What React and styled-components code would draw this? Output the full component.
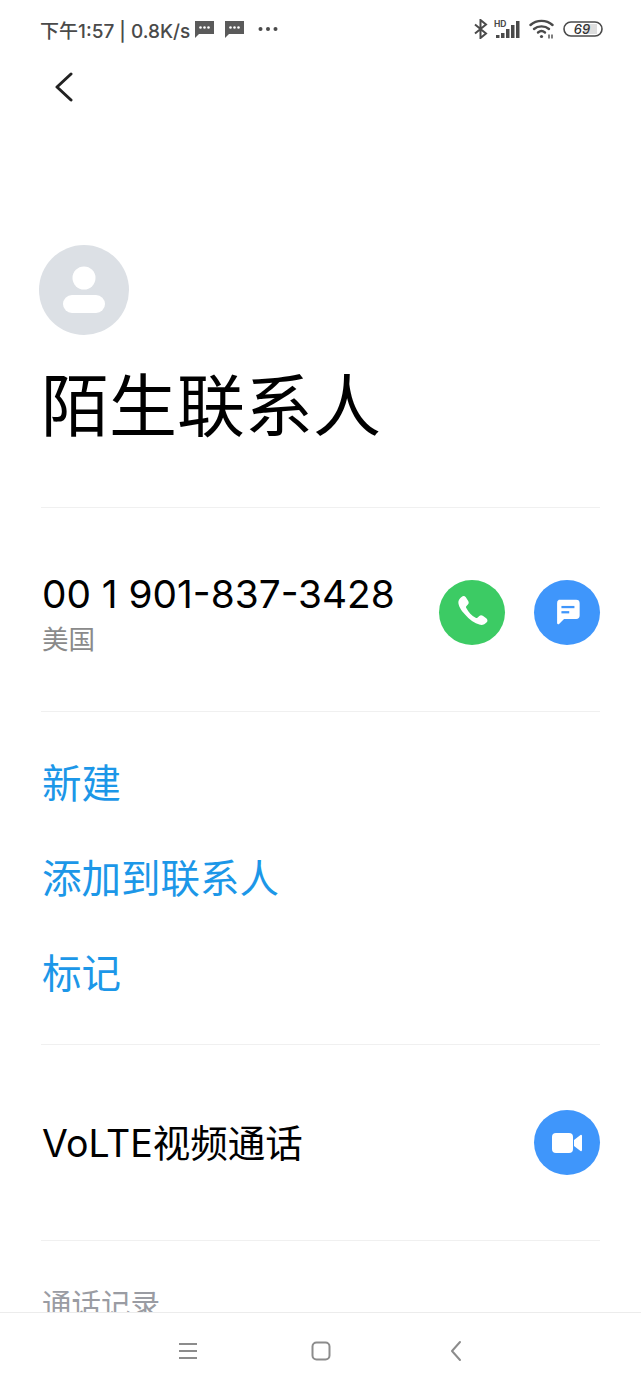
import React from 'react'
import styled, { createGlobalStyle } from 'styled-components'

const GlobalStyle = createGlobalStyle`
  html, body {
    margin: 0;
    padding: 0;
    background: #fff;
  }
  body {
    font-family: "Inter", "Noto Sans CJK SC", sans-serif;
  }
`

const Page = styled.div`
  width: 641px;
  height: 1389px;
  display: flex;
  flex-direction: column;
  overflow: hidden;
  background: #fff;
`

const Scroll = styled.div`
  flex: 1;
  min-height: 0;
  overflow: hidden;
`

const StatusBar = styled.div`
  height: 60px;
  box-sizing: border-box;
  padding: 0 38px 2px 40px;
  display: flex;
  align-items: center;
  justify-content: space-between;
  color: #4a4a4a;
`

const StatusLeft = styled.div`
  display: flex;
  align-items: center;
  font-size: 19px;
  font-weight: 500;
  white-space: nowrap;
`

const StatusRight = styled.div`
  display: flex;
  align-items: center;
`

const Glyph = styled.svg`
  flex: none;
  margin-left: ${p => p.$ml || 0}px;
`

const BackRow = styled.div`
  height: 53px;
  padding-left: 54px;
  display: flex;
  align-items: center;
`

const Content = styled.div`
  padding: 132px 41px 0 42px;
`

const Avatar = styled.div`
  width: 90px;
  height: 90px;
  margin-left: -3px;
  border-radius: 50%;
  background: #dce0e5;
  display: flex;
  align-items: center;
  justify-content: center;
`

const Title = styled.h1`
  margin: 22px 0 0 -1px;
  font-size: 68px;
  line-height: 98px;
  font-weight: 400;
  color: #000;
  white-space: nowrap;
`

const Divider = styled.div`
  height: 1px;
  background: #f0f0f0;
  margin: ${p => p.$top}px 0 0 -1px;
`

const PhoneRow = styled.div`
  margin-top: 64px;
  display: flex;
  align-items: center;
  justify-content: space-between;
`

const PhoneText = styled.div`
  display: flex;
  flex-direction: column;
`

const PhoneNumber = styled.div`
  font-size: 38.8px;
  line-height: 44px;
  color: #000;
  white-space: nowrap;
`

const Region = styled.div`
  margin-top: 6px;
  font-size: 26.5px;
  line-height: 34px;
  color: #8a8a8a;
`

const Buttons = styled.div`
  display: flex;
  gap: 29px;
  margin-bottom: 4px;
`

const RoundButton = styled.div`
  width: 66px;
  height: 65px;
  border-radius: 50%;
  background: ${p => p.$color};
  display: flex;
  align-items: center;
  justify-content: center;
`

const Actions = styled.div`
  margin-top: 25px;
  display: flex;
  flex-direction: column;
`

const Action = styled.div`
  height: 95px;
  line-height: 95px;
  font-size: 39.5px;
  color: #1c97e8;
`

const VideoRow = styled.div`
  margin-top: 65px;
  display: flex;
  align-items: center;
  justify-content: space-between;
`

const VideoLabel = styled.div`
  margin-bottom: 4px;
  font-size: 37.5px;
  color: #000;
  white-space: nowrap;
`

const SectionLabel = styled.div`
  margin-top: 42px;
  font-size: 29.5px;
  line-height: 42px;
  color: #9a9ca3;
`

const NavBar = styled.div`
  flex: none;
  height: 76px;
  border-top: 1px solid #ececec;
  background: #fff;
  display: flex;
  align-items: center;
  justify-content: center;
  gap: 113px;
  padding-left: 4px;
`

function PersonIcon() {
  return (
    <svg width="44" height="48" viewBox="0 0 44 48">
      <circle cx="22" cy="12" r="11.5" fill="#fff" />
      <rect x="1" y="29" width="42" height="18" rx="9" fill="#fff" />
    </svg>
  )
}

function MsgIcon({ ml }) {
  return (
    <Glyph $ml={ml} width="21" height="19" viewBox="0 0 21 19">
      <path d="M1 1h19v13H5l-4 4z" fill="#5a5a5a" />
      <circle cx="6.5" cy="7.5" r="1.3" fill="#fff" />
      <circle cx="10.5" cy="7.5" r="1.3" fill="#fff" />
      <circle cx="14.5" cy="7.5" r="1.3" fill="#fff" />
    </Glyph>
  )
}

function SignalIcon() {
  return (
    <Glyph $ml={6} width="26" height="20" viewBox="0 0 26 20">
      <text x="0" y="7.5" fontSize="8.5" fontWeight="700" fontFamily="Inter, sans-serif" fill="#4a4a4a">HD</text>
      <rect x="2" y="16" width="3.5" height="3" fill="#4a4a4a" />
      <rect x="7" y="14" width="3.5" height="5" fill="#4a4a4a" />
      <rect x="12" y="10" width="3.5" height="9" fill="#4a4a4a" />
      <rect x="17" y="6" width="3.5" height="13" fill="#4a4a4a" />
      <rect x="22" y="2" width="3.5" height="17" fill="#4a4a4a" />
    </Glyph>
  )
}

export default function App() {
  return (
    <Page>
      <GlobalStyle />
      <Scroll>
        <StatusBar>
          <StatusLeft>
            下午1:57 | 0.8K/s
            <MsgIcon ml={4} />
            <MsgIcon ml={9} />
            <Glyph $ml={13} width="20" height="6" viewBox="0 0 20 6">
              <circle cx="2.5" cy="3" r="2" fill="#4a4a4a" />
              <circle cx="10" cy="3" r="2" fill="#4a4a4a" />
              <circle cx="17.5" cy="3" r="2" fill="#4a4a4a" />
            </Glyph>
          </StatusLeft>
          <StatusRight>
            <Glyph width="14" height="20" viewBox="0 0 14 20" fill="none" stroke="#4a4a4a" strokeWidth="2">
              <path d="M1 5.5l11 9-5.5 4.5V1l5.5 4.5-11 9" />
            </Glyph>
            <SignalIcon />
            <Glyph $ml={9} width="25" height="20" viewBox="0 0 25 20" fill="none" stroke="#4a4a4a" strokeWidth="2.4" strokeLinecap="round">
              <path d="M1.5 6c6-5.5 16-5.5 22 0" />
              <path d="M5 10c4-3.5 11-3.5 15 0" />
              <path d="M9 13.5c2-1.6 5-1.6 7 0" />
              <circle cx="12.5" cy="17.5" r="1.6" fill="#4a4a4a" stroke="none" />
              <path d="M20 15.5v4M23 15.5v4" strokeWidth="1.4" strokeLinecap="butt" />
            </Glyph>
            <Glyph $ml={9} width="40" height="16" viewBox="0 0 40 16">
              <rect x="1" y="1" width="38" height="14" rx="7" fill="#fff" stroke="#4a4a4a" strokeWidth="1.6" />
              <rect x="21" y="3" width="13" height="10" fill="#dedede" />
              <text x="19" y="12.5" textAnchor="middle" fontSize="13" fontStyle="italic" fontWeight="500" fontFamily="Inter, sans-serif" fill="#333">69</text>
            </Glyph>
          </StatusRight>
        </StatusBar>
        <BackRow>
          <svg width="20" height="30" viewBox="0 0 20 30" fill="none" stroke="#222" strokeWidth="3" strokeLinecap="round" strokeLinejoin="round">
            <path d="M17 2L3 15l14 13" />
          </svg>
        </BackRow>
        <Content>
          <Avatar>
            <PersonIcon />
          </Avatar>
          <Title>陌生联系人</Title>
          <Divider $top={52} />
          <PhoneRow>
            <PhoneText>
              <PhoneNumber>00 1 901-837-3428</PhoneNumber>
              <Region>美国</Region>
            </PhoneText>
            <Buttons>
              <RoundButton $color="#3ccb64">
                <svg width="38" height="38" viewBox="0 0 24 24" fill="#fff">
                  <path d="M5.6 2.3c.8-.6 1.9-.4 2.5.4l1.500 2.300c.5.7.4 1.700-.2 2.300l-1 1c-.3.3-.3.7-.1 1 1.600 2.900 3.400 4.900 6 6.400.4.2.8.2 1.100-.1l1.200-1.100c.6-.5 1.500-.6 2.200-.1l2.200 1.500c.9.6 1 1.900.3 2.600-1.100 1.200-2.600 2-4.200 1.600-3.600-.9-6.900-3.300-9.500-6.500C4.900 11 3.200 7.800 3.400 5.600c.1-1.300 1.100-2.500 2.200-3.300z" />
                </svg>
              </RoundButton>
              <RoundButton $color="#3f96fb">
                <svg width="27" height="26" viewBox="0 0 30 30">
                  <path d="M5 1h20a4 4 0 0 1 4 4v14a4 4 0 0 1-4 4H11l-6 6a1.5 1.5 0 0 1-2-1V5a4 4 0 0 1 2-4z" fill="#fff" />
                  <rect x="8" y="8" width="15" height="2.6" fill="#3f96fb" />
                  <rect x="8" y="14" width="9" height="2.6" fill="#3f96fb" />
                </svg>
              </RoundButton>
            </Buttons>
          </PhoneRow>
          <Divider $top={55} />
          <Actions>
            <Action>新建</Action>
            <Action>添加到联系人</Action>
            <Action>标记</Action>
          </Actions>
          <Divider $top={22} />
          <VideoRow>
            <VideoLabel>VoLTE视频通话</VideoLabel>
            <RoundButton $color="#3f96fb">
              <svg width="30" height="22" viewBox="0 0 30 22">
                <rect x="0" y="1" width="21" height="20" rx="4" fill="#fff" />
                <path d="M22 8l6.5-5a1 1 0 0 1 1.5 1v14a1 1 0 0 1-1.5 1L22 14z" fill="#fff" />
              </svg>
            </RoundButton>
          </VideoRow>
          <Divider $top={65} />
          <SectionLabel>通话记录</SectionLabel>
        </Content>
      </Scroll>
      <NavBar>
        <svg width="20" height="18" viewBox="0 0 20 18" stroke="#8c8c8c" strokeWidth="1.8">
          <path d="M1 2h18M1 9h18M1 16h18" />
        </svg>
        <svg width="20" height="20" viewBox="0 0 20 20" fill="none" stroke="#8c8c8c" strokeWidth="2">
          <rect x="1.5" y="1.5" width="17" height="17" rx="4" />
        </svg>
        <svg width="24" height="22" viewBox="0 0 24 22" fill="none" stroke="#8c8c8c" strokeWidth="2" strokeLinecap="round" strokeLinejoin="round">
          <path d="M16 2l-8 9 8 9" />
        </svg>
      </NavBar>
    </Page>
  )
}
